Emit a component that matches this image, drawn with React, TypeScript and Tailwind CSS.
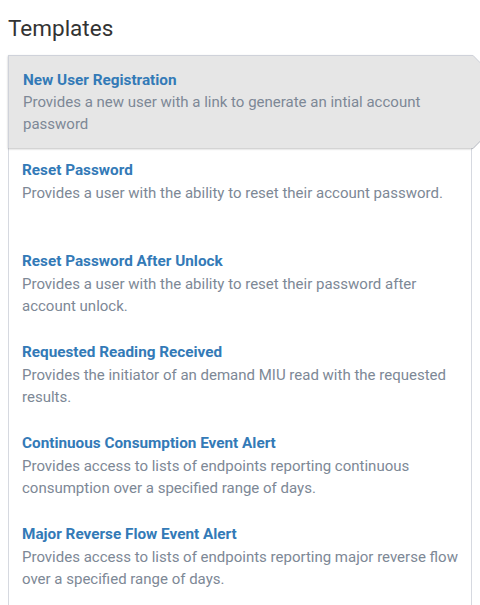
import React from "react";

const items = [
  {
    title: "New User Registration",
    desc: "Provides a new user with a link to generate an intial account password",
  },
  {
    title: "Reset Password",
    desc: "Provides a user with the ability to reset their account password.",
  },
  {
    title: "Reset Password After Unlock",
    desc: "Provides a user with the ability to reset their password after account unlock.",
  },
  {
    title: "Requested Reading Received",
    desc: "Provides the initiator of an demand MIU read with the requested results.",
  },
  {
    title: "Continuous Consumption Event Alert",
    desc: "Provides access to lists of endpoints reporting continuous consumption over a specified range of days.",
  },
  {
    title: "Major Reverse Flow Event Alert",
    desc: "Provides access to lists of endpoints reporting major reverse flow over a specified range of days.",
  },
];

export default function App() {
  return (
    <div
      className="w-[480px] h-[605px] overflow-hidden bg-white pl-2"
      style={{ fontFamily: "Roboto, 'Liberation Sans', sans-serif" }}
    >
      <h1 className="mt-[14px] text-[22.5px] leading-[28px] text-[#333333] font-normal">
        Templates
      </h1>
      <div className="mt-[13px] w-[464px] border-x border-[#d6d9e0] pb-10">
        {items.map((it, i) =>
          i === 0 ? (
            <div
              key={i}
              className="relative -ml-px w-[464px] h-[93px] bg-[#e6e6e6] border-t border-l border-[#cfd2da] shadow-[0_1px_2px_rgba(0,0,0,0.25)] pl-[14px] pr-4 pt-[14px] z-10"
            >
              <div className="text-[15.3px] leading-[21px] font-bold text-[#337ab7]">
                {it.title}
              </div>
              <div className="text-[15px] leading-[22px] text-[#7d8896]">{it.desc}</div>
              <svg
                className="absolute top-[-1px] right-[-47px]"
                width="47"
                height="94"
                viewBox="0 0 47 94"
              >
                <polygon points="0,0 1,0 47,47 1,94 0,94" fill="#e6e6e6" />
                <polyline points="0,0.5 1,0.5 47,47" fill="none" stroke="#cfd2da" strokeWidth="1" />
                <polyline points="47,47 1,93.5 0,93.5" fill="none" stroke="#b9bcc4" strokeWidth="1" />
              </svg>
            </div>
          ) : (
            <div key={i} className="h-[91px] pl-[13px] pr-3 pt-[12px]">
              <div className="text-[15.3px] leading-[21px] font-bold text-[#337ab7]">
                {it.title}
              </div>
              <div className="mt-[1px] text-[15px] leading-[22px] text-[#7d8896]">{it.desc}</div>
            </div>
          )
        )}
      </div>
    </div>
  );
}
